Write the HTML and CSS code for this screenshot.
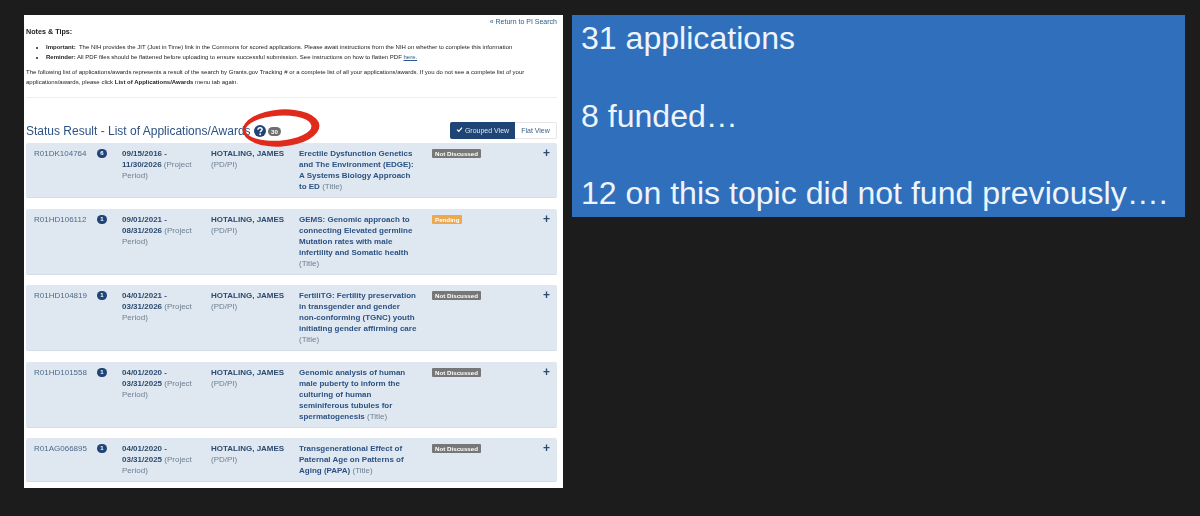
FILE: index.html
```html
<!DOCTYPE html>
<html lang="en">
<head>
<meta charset="utf-8">
<title>Status Result</title>
<link rel="stylesheet" href="styles.css">
</head>
<body>
<main class="panel">
  <div class="return"><a href="#">« Return to PI Search</a></div>
  <p class="notes-head">Notes &amp; Tips:</p>
  <ul class="notes">
    <li><b>Important:</b>&nbsp; The NIH provides the JIT (Just in Time) link in the Commons for scored applications. Please await instructions from the NIH on whether to complete this information</li>
    <li><b>Reminder:</b> All PDF files should be flattened before uploading to ensure successful submission. See instructions on how to flatten PDF <a href="#">here.</a></li>
  </ul>
  <p class="intro">The following list of applications/awards represents a result of the search by Grants.gov Tracking # or a complete list of all your applications/awards. If you do not see a complete list of your applications/awards, please click <b>List of Applications/Awards</b> menu tab again.</p>
  <hr class="rule">
  <div class="heading-row">
    <h1>Status Result - List of Applications/Awards</h1>
    <svg class="help" viewBox="0 0 12 12"><circle cx="6" cy="6" r="6" fill="#1f4476"/><path d="M4 4.7C4 3.4 5 2.7 6.1 2.7S8.1 3.4 8.1 4.5C8.1 5.8 6.2 5.8 6.2 7.2" fill="none" stroke="#fff" stroke-width="1.5"/><circle cx="6.2" cy="9.2" r="0.95" fill="#fff"/></svg>
    <span class="count">30</span>
    <div class="toggle">
      <span class="toggle-on"><svg class="check" viewBox="0 0 10 10"><path d="M1.5 5.2 4 7.6 8.6 2.4" fill="none" stroke="#fff" stroke-width="1.8"/></svg>Grouped View</span>
      <span class="toggle-off">Flat View</span>
    </div>
  </div>
  <section class="rows">
    <article class="card">
      <span class="id">R01DK104764</span><span class="num">6</span>
      <div class="dates"><b>09/15/2016 - 11/30/2026</b> <span>(Project Period)</span></div>
      <div class="pi"><b>HOTALING, JAMES</b><br><span>(PD/PI)</span></div>
      <div class="title"><b>Erectile Dysfunction Genetics and The Environment (EDGE): A Systems Biology Approach to ED</b> <span>(Title)</span></div>
      <div><span class="status grey">Not Discussed</span></div>
      <span class="plus">+</span>
    </article>
    <article class="card">
      <span class="id">R01HD106112</span><span class="num">1</span>
      <div class="dates"><b>09/01/2021 - 08/31/2026</b> <span>(Project Period)</span></div>
      <div class="pi"><b>HOTALING, JAMES</b><br><span>(PD/PI)</span></div>
      <div class="title"><b>GEMS: Genomic approach to connecting Elevated germline Mutation rates with male infertility and Somatic health</b> <span>(Title)</span></div>
      <div><span class="status amber">Pending</span></div>
      <span class="plus">+</span>
    </article>
    <article class="card">
      <span class="id">R01HD104819</span><span class="num">1</span>
      <div class="dates"><b>04/01/2021 - 03/31/2026</b> <span>(Project Period)</span></div>
      <div class="pi"><b>HOTALING, JAMES</b><br><span>(PD/PI)</span></div>
      <div class="title"><b>FertiliTG: Fertility preservation in transgender and gender <span class="keep">non-conforming</span> (TGNC) youth initiating gender affirming care</b> <span>(Title)</span></div>
      <div><span class="status grey">Not Discussed</span></div>
      <span class="plus">+</span>
    </article>
    <article class="card">
      <span class="id">R01HD101558</span><span class="num">1</span>
      <div class="dates"><b>04/01/2020 - 03/31/2025</b> <span>(Project Period)</span></div>
      <div class="pi"><b>HOTALING, JAMES</b><br><span>(PD/PI)</span></div>
      <div class="title"><b>Genomic analysis of human male puberty to inform the culturing of human seminiferous tubules for spermatogenesis</b> <span>(Title)</span></div>
      <div><span class="status grey">Not Discussed</span></div>
      <span class="plus">+</span>
    </article>
    <article class="card">
      <span class="id">R01AG066895</span><span class="num">1</span>
      <div class="dates"><b>04/01/2020 - 03/31/2025</b> <span>(Project Period)</span></div>
      <div class="pi"><b>HOTALING, JAMES</b><br><span>(PD/PI)</span></div>
      <div class="title"><b>Transgenerational Effect of Paternal Age on Patterns of Aging (PAPA)</b> <span>(Title)</span></div>
      <div><span class="status grey">Not Discussed</span></div>
      <span class="plus">+</span>
    </article>
  </section>
  <svg class="ring" viewBox="0 0 80 40"><path fill="#df2a1c" fill-rule="evenodd" transform="rotate(-4 40 20)" d="M1.5 20a38.5 18.500 0 1 0 77 0a38.500 18.500 0 1 0-77 0ZM4.500 20a33 12.500 0 1 0 66 0a33 12.500 0 1 0-66 0Z"/></svg>
</main>
<aside class="summary">
  <p>31 applications</p>
  <p>8 funded…</p>
  <p>12 on this topic did not fund previously….</p>
</aside>
</body>
</html>
```
FILE: styles.css
```css
* { box-sizing: border-box; }
html, body { height: 100%; }
body {
  margin: 0;
  padding: 15px 0 0 24px;
  background: #1c1c1c;
  display: flex;
  align-items: flex-start;
  gap: 9px;
  overflow: hidden;
  font-family: "Liberation Sans", Arial, sans-serif;
}
.panel {
  position: relative;
  width: 539px;
  height: 473px;
  background: #fff;
  padding: 1px 6px 0 2px;
  color: #222;
  overflow: hidden;
  filter: blur(0.3px);
}
a { color: #2f5a8e; text-decoration: none; }
.return { text-align: right; font-size: 7px; line-height: 11px; }
.notes-head { margin: 0; font-size: 7.2px; line-height: 10px; font-weight: bold; }
.notes { margin: 5px 0 0; padding: 0 0 0 20px; font-size: 6px; line-height: 10px; }
.notes a { text-decoration: underline; }
.intro { margin: 5px 0 0; font-size: 6px; line-height: 10px; }
.rule { margin: 10px 0 0; border: 0; border-top: 1px solid #eee; }
.heading-row { display: flex; align-items: center; margin-top: 24px; height: 17px; }
h1 { margin: 0; font-size: 12px; font-weight: normal; color: #2c5284; white-space: nowrap; }
.help { width: 12px; height: 12px; margin-left: 3px; }
.count { margin: 2px 0 0 2px; padding: 0 3.500px; border-radius: 7px; background: #6f6f6f; color: #fff; font-size: 6.200px; line-height: 9px; font-weight: bold; }
.toggle { margin-left: auto; display: flex; height: 17px; font-size: 7px; line-height: 17px; }
.toggle-on { width: 65px; background: #1f4476; color: #dfe7f0; border-radius: 2px 0 0 2px; text-align: center; }
.check { width: 7px; height: 7px; margin-right: 2px; }
.toggle-off { width: 42px; border: 1px solid #e6e6e6; border-left: 0; color: #3d5f86; text-align: center; line-height: 15px; border-radius: 0 2px 2px 0; }
.rows { margin-top: 4px; display: flex; flex-direction: column; gap: 10.500px; }
.card {
  display: grid;
  grid-template-columns: 63px 25px 89px 88px 133px 1fr 14px;
  padding: 5px 0 5px 8px;
  background: #dfe8f0;
  border-bottom: 1px solid #d3dde6;
  border-radius: 2px;
  font-size: 8px;
  line-height: 11px;
  color: #6d7f92;
}
.id { color: #4d6a8a; }
.num { width: 10px; height: 9px; margin-top: 1px; border-radius: 5px; background: #1f4476; color: #fff; font-size: 6px; line-height: 9px; font-weight: bold; text-align: center; }
.dates { width: 78px; }
.dates b, .pi b { color: #2c4a70; }
.title { width: 119px; }
.title b { color: #2c5284; }
.keep { white-space: nowrap; color: inherit; }
.status { display: inline-block; margin-top: 1px; padding: 0 3px; border-radius: 1px; color: #fff; font-size: 6.200px; line-height: 9px; font-weight: bold; vertical-align: top; }
.grey { background: #777; }
.amber { background: #eda94f; }
.plus { color: #2c4a70; font-size: 12px; line-height: 10px; font-weight: bold; }
.ring { position: absolute; left: 217px; top: 93px; width: 80px; height: 40px; }
.summary {
  width: 613px;
  height: 202px;
  padding: 4px 9px 0;
  background: #2f6fbb;
  color: #eef4fb;
  font-size: 32.100px;
  line-height: 39px;
  display: flex;
  flex-direction: column;
  gap: 38.500px;
}
.summary p { margin: 0; white-space: nowrap; }
```
